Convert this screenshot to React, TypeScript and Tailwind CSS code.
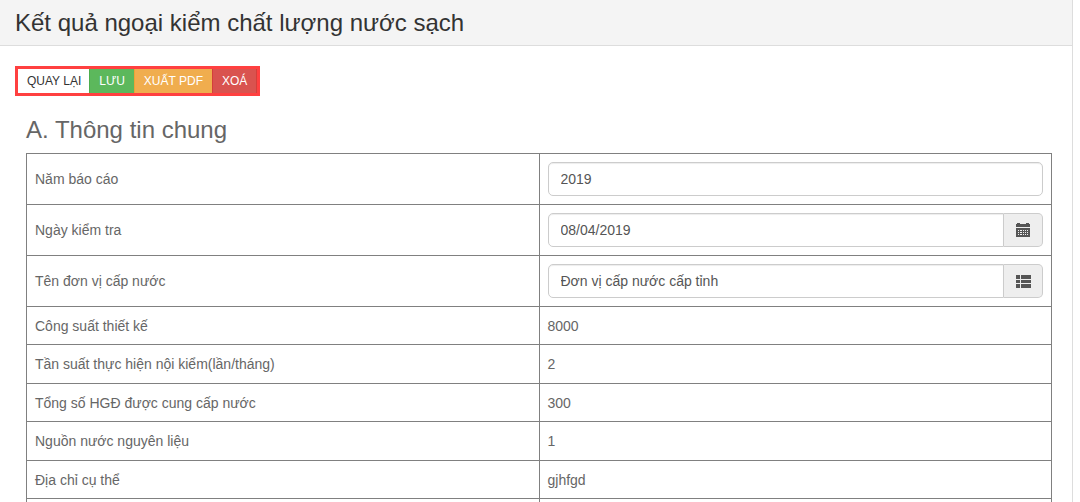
import React from "react";

const text = "font-['Liberation_Sans',Arial,sans-serif]";
const fieldClass =
  "h-[34px] w-full min-w-0 border border-[#ccc] bg-white px-3 text-sm text-[#555] shadow-[inset_0_1px_1px_rgba(0,0,0,0.075)] outline-none focus:border-[#66afe9]";
const addonClass =
  "flex h-[34px] w-[39px] shrink-0 items-center justify-center rounded-r-[5px] border border-l-0 border-[#ccc] bg-[#eee] text-[#555]";

function CalendarIcon() {
  return (
    <svg width="14" height="14" viewBox="0 0 14 14" fill="currentColor" aria-hidden="true">
      <path d="M0 1h1V0h3v1h6V0h3v1h1v3H0z" />
      <path
        fillRule="evenodd"
        d="M0 5h14v9H0zM2 7v1h1V7zM4 7v1h2V7zM7 7v1h1V7zM9 7v1h1V7zM11 7v1h1V7zM2 9v1h1V9zM4 9v1h2V9zM7 9v1h1V9zM9 9v1h1V9zM11 9v1h1V9zM2 11v1h1v-1zM4 11v1h2v-1zM7 11v1h1v-1zM9 11v1h1v-1zM11 11v1h1v-1z"
      />
    </svg>
  );
}

function ListIcon() {
  return (
    <svg width="15" height="13" viewBox="0 0 15 13" fill="currentColor" aria-hidden="true">
      <path d="M0 0h4v4H0zM5 0h10v4H5zM0 5h4v3H0zM5 5h10v3H5zM0 9h4v4H0zM5 9h10v4H5z" />
    </svg>
  );
}

const fields = [
  { id: "year", label: "Năm báo cáo", value: "2019" },
  { id: "date", label: "Ngày kiểm tra", value: "08/04/2019", icon: <CalendarIcon />, action: "Chọn ngày" },
  { id: "unit", label: "Tên đơn vị cấp nước", value: "Đơn vị cấp nước cấp tỉnh", icon: <ListIcon />, action: "Chọn đơn vị" },
];

const details = [
  ["Công suất thiết kế", "8000"],
  ["Tần suất thực hiện nội kiểm(lần/tháng)", "2"],
  ["Tổng số HGĐ được cung cấp nước", "300"],
  ["Nguồn nước nguyên liệu", "1"],
  ["Địa chỉ cụ thể", "gjhfgd"],
  ["", ""],
];

const buttons = [
  { label: "QUAY LẠI", style: "bg-white text-[#333]" },
  { label: "LƯU", style: "-ml-px border-x border-[#4cae4c] bg-[#5cb85c] text-white" },
  { label: "XUẤT PDF", style: "-ml-px border-x border-[#eea236] bg-[#f0ad4e] text-white" },
  { label: "XOÁ", style: "-ml-px border-x border-[#d43f3a] bg-[#d9534f] text-white" },
];

export default function App() {
  return (
    <div className={`h-screen overflow-hidden bg-white pr-[7px] text-sm text-[#666] ${text}`}>
      <main className="min-h-full border-r border-[#ddd]">
        <header className="border-b border-[#ddd] bg-[#f4f4f4] px-[15px] pt-[10px] pb-[9px]">
          <h1 className="text-2xl leading-[26px] text-[#333]">Kết quả ngoại kiểm chất lượng nước sạch</h1>
        </header>

        <div className="px-[15px] pt-5">
          <div className="inline-flex border-[3px] border-[#ff4040] align-top">
            {buttons.map((b) => (
              <button key={b.label} type="button" className={`h-6 px-[9px] text-xs ${b.style}`}>
                {b.label}
              </button>
            ))}
          </div>
        </div>

        <section className="pt-5 pr-5 pl-[26px]">
          <h2 className="pb-[10px] text-2xl leading-[27px]">A. Thông tin chung</h2>
          <table className="w-full table-fixed border-collapse border border-[#808080]">
            <tbody>
              {fields.map((f) => (
                <tr key={f.id} className="h-[51px]">
                  <td className="border border-[#808080] px-2">
                    <label htmlFor={f.id}>{f.label}</label>
                  </td>
                  <td className="border border-[#808080] px-2">
                    <div className="flex">
                      <input
                        id={f.id}
                        type="text"
                        defaultValue={f.value}
                        className={`${fieldClass} ${f.icon ? "rounded-l-[5px]" : "rounded-[5px]"}`}
                      />
                      {f.icon && (
                        <button type="button" aria-label={f.action} className={addonClass}>
                          {f.icon}
                        </button>
                      )}
                    </div>
                  </td>
                </tr>
              ))}
              {details.map(([label, value]) => (
                <tr key={label} className="h-[38px] odd:h-[39px]">
                  <td className="border border-[#808080] px-2">{label}</td>
                  <td className="border border-[#808080] px-2">{value}</td>
                </tr>
              ))}
            </tbody>
          </table>
        </section>
      </main>
    </div>
  );
}
